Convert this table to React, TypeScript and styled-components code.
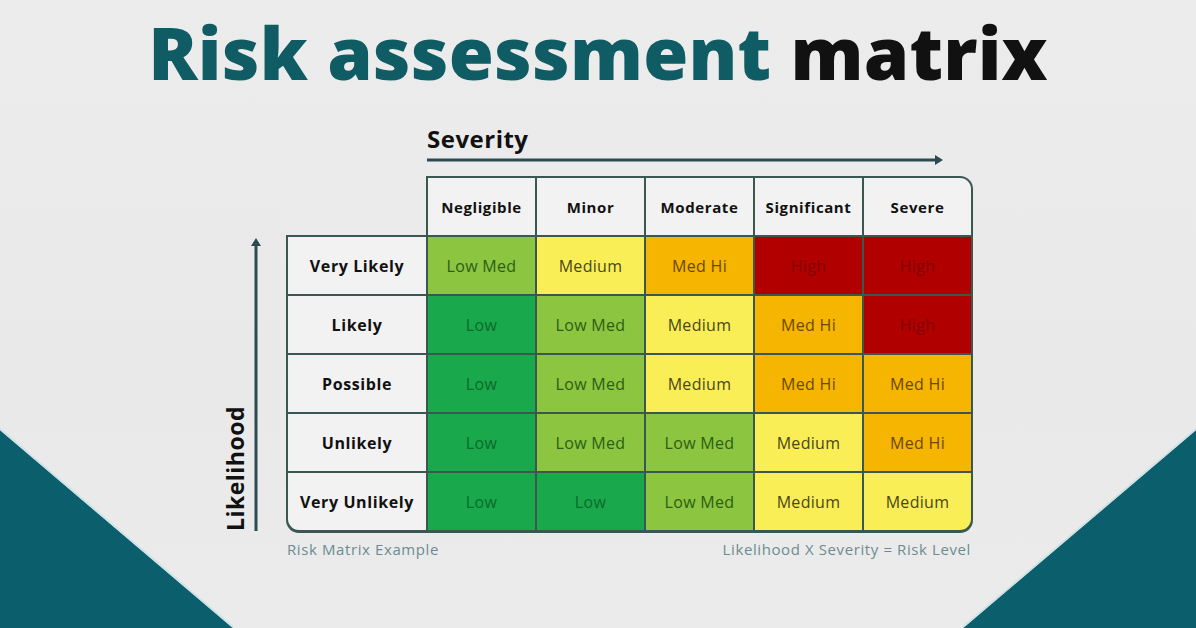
import React from "react";
import styled, { createGlobalStyle } from "styled-components";

const Global = createGlobalStyle`
  html, body { margin: 0; padding: 0; }
  body { background: #ebebeb; font-family: "Open Sans", "Liberation Sans", sans-serif; }
`;

const Page = styled.div`
  position: relative;
  width: 1196px;
  height: 628px;
  overflow: hidden;
  background: linear-gradient(180deg, #ececec 0%, #e9e9e9 60%, #ebebeb 100%);
`;

const Corner = styled.svg<{ $side: "left" | "right" }>`
  position: absolute;
  bottom: 0;
  ${(p) => (p.$side === "left" ? "left: 0;" : "right: 0;")}
  width: 236px;
  height: 200px;
`;

const Content = styled.div`
  position: relative;
  display: flex;
  flex-direction: column;
`;

const Title = styled.h1`
  margin: 4px 0 0 0;
  text-align: center;
  font-family: "Open Sans", sans-serif;
  font-weight: 800;
  font-size: 73px;
  line-height: 96px;
  letter-spacing: 0.2px;
  color: #0f5c64;
`;

const Dark = styled.span`
  color: #111111;
`;

const Chart = styled.div`
  display: grid;
  grid-template-columns: 66px 687px;
  grid-template-rows: auto auto auto;
  margin-left: 220px;
`;

const SeverityAxis = styled.div`
  grid-column: 2;
  grid-row: 1;
  display: flex;
  flex-direction: column;
  margin-left: 141px;
  width: 518px;
  padding-top: 24px;
  padding-bottom: 10px;
`;

const AxisLabel = styled.div`
  font-family: "Open Sans", sans-serif;
  font-weight: 700;
  font-size: 24px;
  line-height: 30px;
  letter-spacing: 0.5px;
  color: #111;
`;

const LikelihoodAxis = styled.div`
  grid-column: 1;
  grid-row: 2;
  display: flex;
  flex-direction: row;
  align-items: flex-end;
  gap: 1px;
  padding-top: 61px;
  padding-left: 1px;
`;

const VerticalLabel = styled(AxisLabel)`
  writing-mode: vertical-rl;
  transform: rotate(180deg);
  font-size: 23px;
  line-height: 28px;
  padding-top: 2px;
`;

const Matrix = styled.div`
  grid-column: 2;
  grid-row: 2;
  display: grid;
  grid-template-columns: 138px repeat(5, 107px);
  grid-template-rows: 57px repeat(5, 57px);
  gap: 2px;
  padding: 2px;
  background: #3a5752;
  border-radius: 0 13px 13px 13px;
  overflow: hidden;
`;

const Blank = styled.div`
  margin: -2px 0 0 -2px;
  background: #ebebeb;
`;

const Head = styled.div<{ $round?: string }>`
  display: flex;
  align-items: center;
  justify-content: center;
  background: #f2f2f2;
  border-radius: ${(p) => p.$round || "0"};
  font-family: "Open Sans", sans-serif;
  font-weight: 700;
  font-size: 15px;
  letter-spacing: 0.6px;
  color: #111;
`;

const RowLabel = styled(Head)`
  font-size: 16px;
`;

type Level = "Low" | "Low Med" | "Medium" | "Med Hi" | "High";

const palette: Record<Level, { bg: string; fg: string }> = {
  Low: { bg: "#19a84b", fg: "#0c6a2c" },
  "Low Med": { bg: "#8cc540", fg: "#2b5e14" },
  Medium: { bg: "#f9ee55", fg: "#4a461a" },
  "Med Hi": { bg: "#f6b500", fg: "#6b4800" },
  High: { bg: "#b00000", fg: "#850000" },
};

const Cell = styled.div<{ $bg: string; $fg: string; $round?: string }>`
  display: flex;
  align-items: center;
  justify-content: center;
  background: ${(p) => p.$bg};
  color: ${(p) => p.$fg};
  border-radius: ${(p) => p.$round || "0"};
  font-family: "Open Sans", sans-serif;
  font-weight: 400;
  font-size: 16px;
  letter-spacing: 0.3px;
`;

const Footer = styled.div`
  grid-column: 2;
  grid-row: 3;
  display: flex;
  justify-content: space-between;
  padding: 6px 2px 0 1px;
  font-family: "Open Sans", sans-serif;
  font-size: 15px;
  letter-spacing: 0.6px;
  color: #6d8b91;
`;

const severities = ["Negligible", "Minor", "Moderate", "Significant", "Severe"];
const rows: { label: string; levels: Level[] }[] = [
  { label: "Very Likely", levels: ["Low Med", "Medium", "Med Hi", "High", "High"] },
  { label: "Likely", levels: ["Low", "Low Med", "Medium", "Med Hi", "High"] },
  { label: "Possible", levels: ["Low", "Low Med", "Medium", "Med Hi", "Med Hi"] },
  { label: "Unlikely", levels: ["Low", "Low Med", "Low Med", "Medium", "Med Hi"] },
  { label: "Very Unlikely", levels: ["Low", "Low", "Low Med", "Medium", "Medium"] },
];

export default function App() {
  return (
    <Page>
      <Global />
      <Corner $side="left" viewBox="0 0 236 200">
        <polygon points="0,2 0,200 233,200" fill="#0b5e6c" />
        <line x1="0" y1="1" x2="233" y2="199" stroke="#cfe3e6" strokeWidth="2" />
      </Corner>
      <Corner $side="right" viewBox="0 0 236 200">
        <polygon points="236,2 236,200 3,200" fill="#0b5e6c" />
        <line x1="236" y1="1" x2="3" y2="199" stroke="#cfe3e6" strokeWidth="2" />
      </Corner>
      <Content>
        <Title>
          Risk assessment <Dark>matrix</Dark>
        </Title>
        <Chart>
          <SeverityAxis>
            <AxisLabel>Severity</AxisLabel>
            <svg width="518" height="12" viewBox="0 0 518 12">
              <line x1="0" y1="6" x2="510" y2="6" stroke="#2c4a52" strokeWidth="3" />
              <polygon points="508,1 516,6 508,11" fill="#2c4a52" />
            </svg>
          </SeverityAxis>
          <LikelihoodAxis>
            <VerticalLabel>Likelihood</VerticalLabel>
            <svg width="12" height="296" viewBox="0 0 12 296">
              <line x1="6" y1="8" x2="6" y2="294" stroke="#2c4a52" strokeWidth="3" />
              <polygon points="1,9 6,1 11,9" fill="#2c4a52" />
            </svg>
          </LikelihoodAxis>
          <Matrix>
            <Blank />
            {severities.map((s, i) => (
              <Head key={s} $round={i === 4 ? "0 11px 0 0" : undefined}>
                {s}
              </Head>
            ))}
            {rows.map((r, ri) => (
              <React.Fragment key={r.label}>
                <RowLabel $round={ri === 4 ? "0 0 0 11px" : undefined}>{r.label}</RowLabel>
                {r.levels.map((l, ci) => (
                  <Cell
                    key={ci}
                    $bg={palette[l].bg}
                    $fg={palette[l].fg}
                    $round={ri === 4 && ci === 4 ? "0 0 11px 0" : undefined}
                  >
                    {l}
                  </Cell>
                ))}
              </React.Fragment>
            ))}
          </Matrix>
          <Footer>
            <span>Risk Matrix Example</span>
            <span>Likelihood X Severity = Risk Level</span>
          </Footer>
        </Chart>
      </Content>
    </Page>
  );
}
